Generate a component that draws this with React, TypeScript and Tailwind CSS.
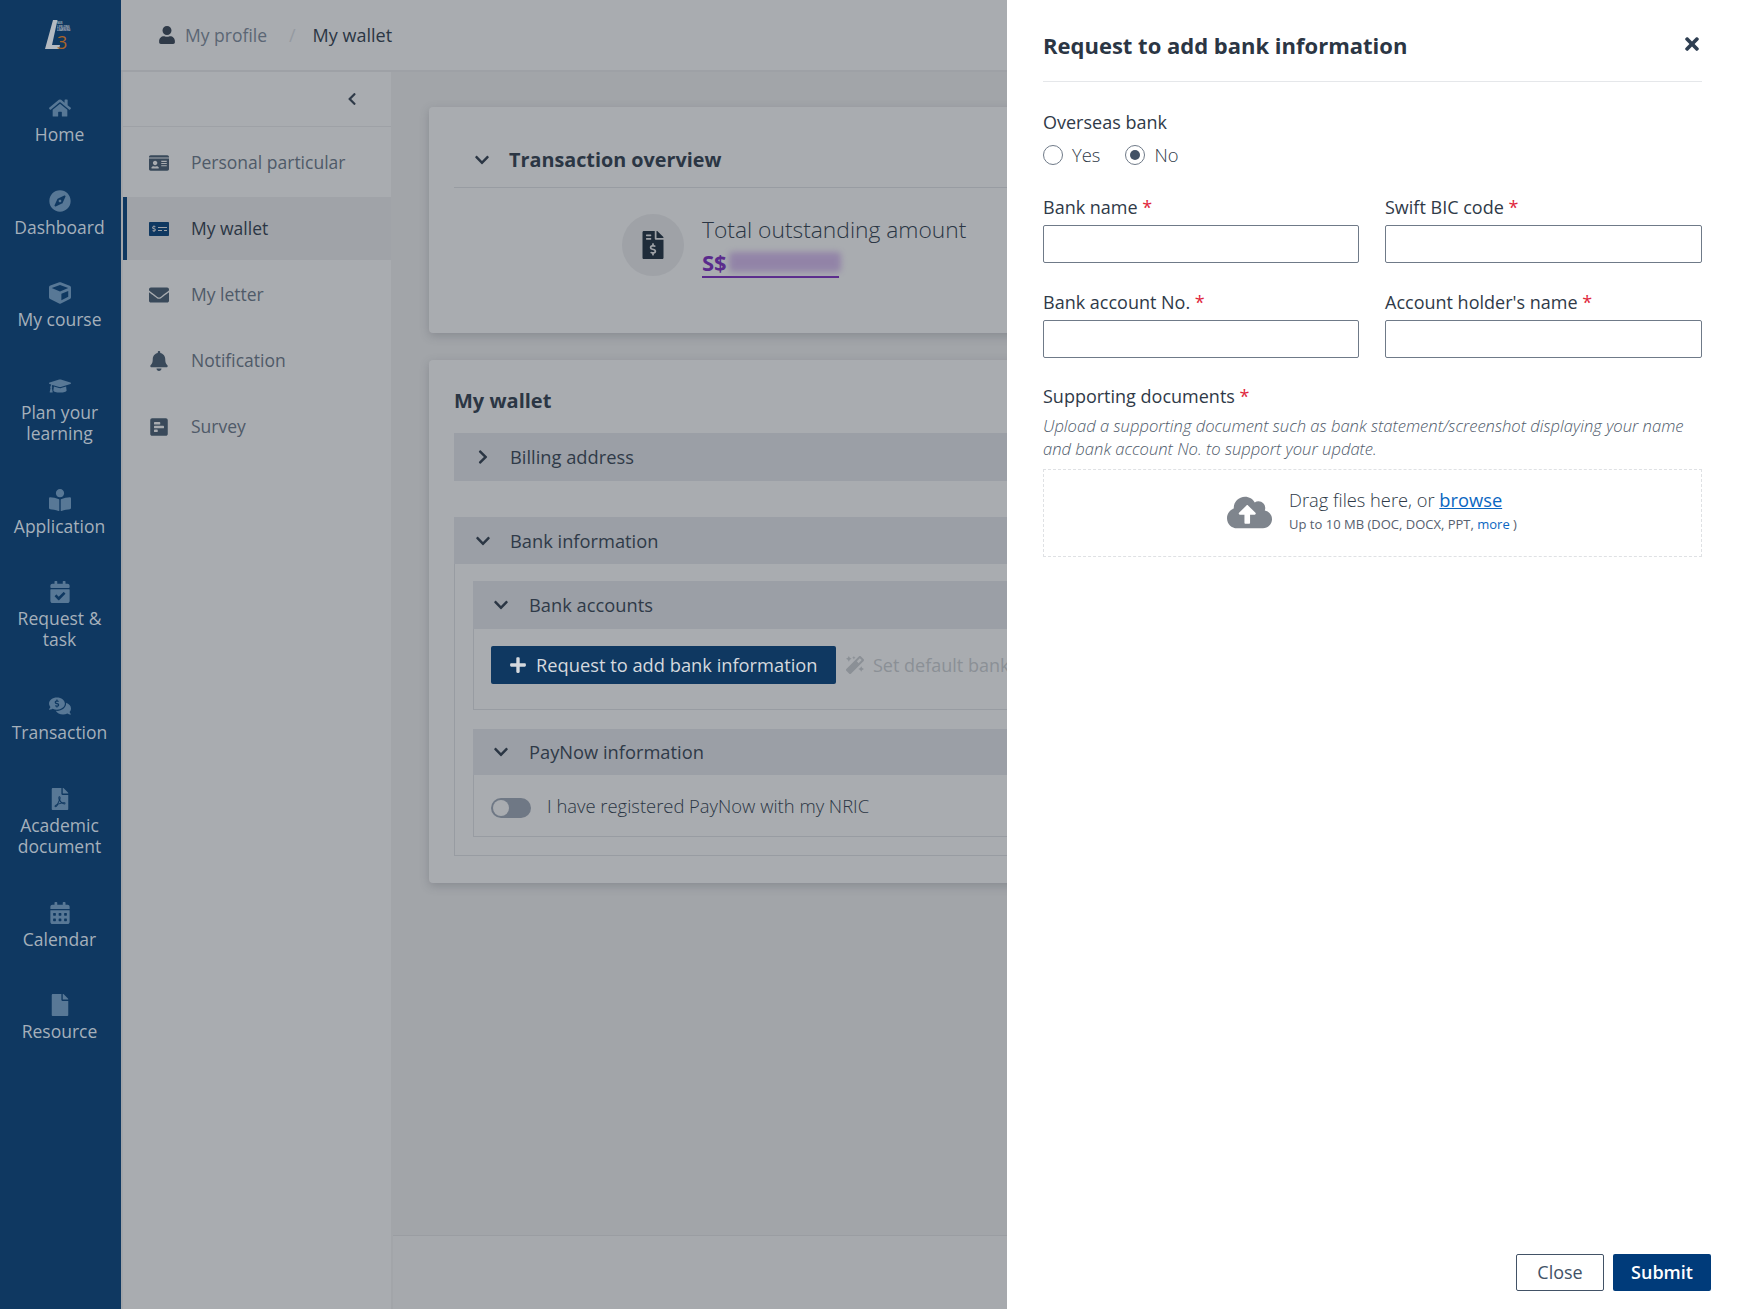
import {
  FaBell,
  FaBookReader,
  FaCalendarAlt,
  FaCalendarCheck,
  FaChevronDown,
  FaChevronLeft,
  FaChevronRight,
  FaCloudUploadAlt,
  FaCommentsDollar,
  FaCompass,
  FaCube,
  FaEnvelope,
  FaFile,
  FaFileInvoiceDollar,
  FaFilePdf,
  FaGraduationCap,
  FaHome,
  FaIdCard,
  FaMagic,
  FaMoneyCheckAlt,
  FaPlus,
  FaPollH,
  FaTimes,
  FaUser,
} from 'react-icons/fa';

const sideItems = [
  { icon: FaHome, label: ['Home'] },
  { icon: FaCompass, label: ['Dashboard'] },
  { icon: FaCube, label: ['My course'] },
  { icon: FaGraduationCap, label: ['Plan your', 'learning'] },
  { icon: FaBookReader, label: ['Application'] },
  { icon: FaCalendarCheck, label: ['Request &', 'task'] },
  { icon: FaCommentsDollar, label: ['Transaction'] },
  { icon: FaFilePdf, label: ['Academic', 'document'] },
  { icon: FaCalendarAlt, label: ['Calendar'] },
  { icon: FaFile, label: ['Resource'] },
];

const profileItems = [
  { icon: FaIdCard, label: 'Personal particular' },
  { icon: FaMoneyCheckAlt, label: 'My wallet', active: true },
  { icon: FaEnvelope, label: 'My letter' },
  { icon: FaBell, label: 'Notification' },
  { icon: FaPollH, label: 'Survey' },
];

function Logo() {
  return (
    <svg width="36" height="36" viewBox="0 0 36 36" className="block overflow-visible">
      <polygon points="11,5 15.5,5 10,30 18,30 17,34 3,34" fill="#b4bac1" />
      <text x="15" y="9" fontSize="2.6" fontWeight="700" fill="#b4bac1" fontFamily="Open Sans">NUS</text>
      <text x="15" y="12.5" fontSize="2.6" fontWeight="700" fill="#b4bac1" fontFamily="Open Sans">LIFELONG</text>
      <text x="15" y="16" fontSize="2.6" fontWeight="700" fill="#b4bac1" fontFamily="Open Sans">LEARNING</text>
      <text x="15" y="34" fontSize="18" fill="#a8642c" fontFamily="Open Sans">3</text>
    </svg>
  );
}

function Sidebar() {
  return (
    <aside className="w-[121px] shrink-0 bg-[#0f3861] pr-[2px]">
      <div className="h-[72px] flex items-center justify-center pb-[6px]">
        <Logo />
      </div>
      <nav className="pt-[25px] flex flex-col gap-[44.7px]">
        {sideItems.map((item) => (
          <div key={item.label[0]} className="flex flex-col items-center">
            <div className="h-[22px] mb-[5px] flex items-center justify-center text-[#587896]">
              <item.icon size={22} />
            </div>
            {item.label.map((line) => (
              <div key={line} className="text-[17.5px] leading-[21px] text-[#a5b0bb] whitespace-nowrap">
                {line}
              </div>
            ))}
          </div>
        ))}
      </nav>
    </aside>
  );
}

function BarHeader({ title, down = true, height = 'h-[48px]', indent = 'pl-[20px]', chevron = 'w-[36px]' }: { title: string; down?: boolean; height?: string; indent?: string; chevron?: string }) {
  return (
    <div className={`${height} ${indent} bg-[#9b9fa6] flex items-center`}>
      <span className={`${chevron} text-[#2b3644]`}>
        {down ? <FaChevronDown size={16} /> : <FaChevronRight size={16} />}
      </span>
      <span className="text-[18.3px] font-medium text-[#2f3a48]">{title}</span>
    </div>
  );
}

function Background() {
  return (
    <div className="flex flex-1 min-w-0 flex-col bg-[#a2a5a9]">
      <header className="h-[72px] shrink-0 bg-[#a9acb0] border-b-2 border-[#9ea1a6] flex items-center pl-[37px]">
        <FaUser size={18} className="text-[#2f3a48]" />
        <span className="ml-[9px] text-[17.5px] text-[#5b6674]">My profile</span>
        <span className="ml-[22px] text-[18px] text-[#959aa1]">/</span>
        <span className="ml-[17px] text-[18px] font-medium text-[#2b3644]">My wallet</span>
      </header>
      <div className="flex flex-1 min-h-0 pl-[2px]">
        <div className="w-[268px] shrink-0 bg-[#a9acb0]">
          <div className="h-[55px] border-b border-[#9ea1a6] flex items-center justify-end pr-[32px] text-[#2f3a48]">
            <FaChevronLeft size={14} />
          </div>
          <div className="pt-[4px] flex flex-col gap-[3px]">
            {profileItems.map((item) =>
              item.active ? (
                <div key={item.label} className="h-[63px] flex items-center pl-[22px] bg-[#a0a3a8] border-l-4 border-[#0f3861]">
                  <item.icon size={20} className="w-[20px] text-[#0f3861]" />
                  <span className="ml-[22px] text-[17.5px] text-[#2b3644]">{item.label}</span>
                </div>
              ) : (
                <div key={item.label} className="h-[63px] flex items-center pl-[26px]">
                  <item.icon size={20} className="w-[20px] text-[#39495a]" />
                  <span className="ml-[22px] text-[17.5px] text-[#4f5a68]">{item.label}</span>
                </div>
              ),
            )}
          </div>
        </div>
        <main className="flex-1 min-w-0 ml-[2px] flex flex-col">
          <div className="flex-1 pt-[35px] pl-[36px] pr-[30px] flex flex-col gap-[27px]">
            <section className="h-[226px] rounded-[4px] bg-[#a9acb0] px-[25px] shadow-[0_3px_10px_rgba(60,65,75,0.25)]">
              <div className="h-[81px] pt-[26px] pl-[20px] border-b border-[#989ca2] flex items-center">
                <span className="w-[35px] text-[#2b3644]">
                  <FaChevronDown size={16} />
                </span>
                <span className="text-[19.8px] font-bold text-[#2b3644]">Transaction overview</span>
              </div>
              <div className="pl-[168px] pt-[26px] flex">
                <div className="w-[62px] h-[62px] rounded-full bg-[#9fa2a7] flex items-center justify-center text-[#1f2c3a]">
                  <FaFileInvoiceDollar size={28} />
                </div>
                <div className="ml-[18px]">
                  <div className="text-[22.8px] leading-[32px] font-light text-[#2b3644]">Total outstanding amount</div>
                  <div className="relative mt-[2px] w-[137px] h-[30px] border-b-2 border-[#5a2a8c] text-[22px] leading-[28px] font-bold text-[#5a2a8c]">
                    S$
                    <span className="absolute left-[27px] top-[4px] w-[112px] h-[20px] rounded-[4px] bg-[#8d7aa6] opacity-80 blur-[3px]" />
                  </div>
                </div>
              </div>
            </section>

            <section className="rounded-[4px] bg-[#a9acb0] px-[25px] pt-[27px] pb-[27px] shadow-[0_3px_10px_rgba(60,65,75,0.25)]">
              <h2 className="text-[20px] leading-[28px] font-bold text-[#2b3644]">My wallet</h2>
              <div className="mt-[18px]">
                <BarHeader title="Billing address" down={false} indent="pl-[21px]" chevron="w-[35px]" />
              </div>
              <div className="mt-[36px]">
                <BarHeader title="Bank information" height="h-[47px]" indent="pl-[21px]" chevron="w-[35px]" />
                <div className="border border-t-0 border-[#989ca2] px-[18px] pt-[17px] pb-[18px]">
                  <BarHeader title="Bank accounts" />
                  <div className="h-[81px] border border-t-0 border-[#989ca2] pt-[17px] pl-[17px] flex items-start">
                    <button className="h-[38px] w-[345px] rounded-[2px] bg-[#0f3861] flex items-center pl-[18px]">
                      <FaPlus size={18} className="text-[#d5d9de]" />
                      <span className="ml-[9px] text-[18.3px] font-medium text-[#d5d9de]">Request to add bank information</span>
                    </button>
                    <span className="ml-[10px] h-[38px] flex items-center text-[#8b9096]">
                      <FaMagic size={18} />
                      <span className="ml-[9px] text-[18px]">Set default bank account</span>
                    </span>
                  </div>
                  <div className="mt-[19px]">
                    <BarHeader title="PayNow information" height="h-[46px]" />
                    <div className="h-[62px] border border-t-0 border-[#989ca2] pl-[17px] flex items-center">
                      <span className="w-[40px] h-[20px] mt-[4px] rounded-full bg-[#6f7885] flex items-center pl-[2px]">
                        <span className="w-[16px] h-[16px] rounded-full bg-[#a9acb0]" />
                      </span>
                      <span className="ml-[16px] text-[18.4px] font-light text-[#2b3644]">I have registered PayNow with my NRIC</span>
                    </div>
                  </div>
                </div>
              </div>
            </section>
          </div>
          <div className="h-[74px] shrink-0 border-t border-[#9a9da2] bg-[#a6a9ad]" />
        </main>
      </div>
    </div>
  );
}

function Label({ text, required = true }: { text: string; required?: boolean }) {
  return (
    <div className="text-[18px] leading-[24px] font-medium text-[#2f3a48]">
      {text}
      {required && <span className="text-[#e0263c]"> *</span>}
    </div>
  );
}

function Field({ label }: { label: string }) {
  return (
    <div>
      <Label text={label} />
      <input className="mt-[6px] block w-full h-[38px] border border-[#6f7a88] rounded-[2px] bg-white" />
    </div>
  );
}

function Radio({ label, checked }: { label: string; checked?: boolean }) {
  return (
    <div className="flex items-center">
      <span className="w-[20px] h-[20px] rounded-full border border-[#6f7a88] flex items-center justify-center">
        {checked && <span className="w-[10px] h-[10px] rounded-full bg-[#425266]" />}
      </span>
      <span className="ml-[9px] text-[18.4px] font-light text-[#2f3a48]">{label}</span>
    </div>
  );
}

function BankPanel() {
  return (
    <div className="absolute top-0 right-0 bottom-0 w-[730px] bg-white flex flex-col pl-[36px] pr-[35px]">
      <div className="h-[82px] shrink-0 border-b border-[#e5e7ea] flex items-start justify-between pt-[28px]">
        <h2 className="text-[22px] leading-[36px] -mt-[1px] font-bold text-[#2b3644]">Request to add bank information</h2>
        <FaTimes size={20} className="text-[#2f3f52] mt-[6px]" />
      </div>

      <div className="pt-[28px]">
        <Label text="Overseas bank" required={false} />
        <div className="mt-[7px] flex gap-[25px]">
          <Radio label="Yes" />
          <Radio label="No" checked />
        </div>
      </div>

      <div className="mt-[26px] grid grid-cols-[316px_317px] gap-x-[26px] gap-y-[27px]">
        <Field label="Bank name" />
        <Field label="Swift BIC code" />
        <Field label="Bank account No." />
        <Field label="Account holder's name" />
      </div>

      <div className="mt-[26px]">
        <Label text="Supporting documents" />
        <p className="mt-[6px] text-[16.6px] leading-[23px] italic font-light text-[#4f5b6b]">
          Upload a supporting document such as bank statement/screenshot displaying your name and bank account No. to support your update.
        </p>
        <div className="mt-[9px] h-[88px] border border-dashed border-[#dfe1e4] flex items-center justify-center">
          <FaCloudUploadAlt size={45} className="text-[#7f858d] mr-[17px] -ml-[1px]" />
          <div className="-mt-[1px]">
            <div className="text-[18.3px] leading-[24px] font-light text-[#2f3a48]">
              Drag files here, or <span className="font-normal text-[#0a66c2] underline">browse</span>
            </div>
            <div className="text-[13px] leading-[24px] text-[#56606e]">
              Up to 10 MB (DOC, DOCX, PPT, <span className="text-[#0a66c2]">more</span> )
            </div>
          </div>
        </div>
      </div>

      <div className="mt-auto pb-[18px] flex justify-end gap-[9px] -mr-[9px]">
        <button className="w-[88px] h-[37px] border border-[#425266] rounded-[2px] text-[18px] text-[#425266]">Close</button>
        <button className="w-[98px] h-[37px] rounded-[2px] bg-[#003b7a] text-[18px] font-semibold text-white">Submit</button>
      </div>
    </div>
  );
}

export default function App() {
  return (
    <div className="relative w-[1737px] h-[1309px] overflow-hidden flex font-['Open_Sans',sans-serif]">
      <Sidebar />
      <Background />
      <BankPanel />
    </div>
  );
}
